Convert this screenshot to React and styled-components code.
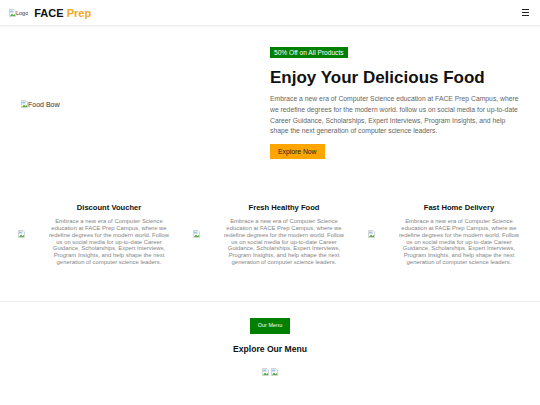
import React from 'react';
import styled, { createGlobalStyle } from 'styled-components';

const GlobalStyle = createGlobalStyle`
  body {
    margin: 0;
    font-family: "Liberation Sans", Arial, sans-serif;
    background: #fff;
    color: #111;
  }
`;

const Nav = styled.nav`
  display: flex;
  align-items: center;
  justify-content: space-between;
  height: 25px;
  padding: 0 11px 0 9px;
  border-bottom: 1px solid #efefef;
  box-shadow: 0 1px 1px rgba(0, 0, 0, 0.03);
`;

const Brand = styled.div`
  display: flex;
  align-items: center;
  gap: 6px;
`;

const BrandName = styled.span`
  font-size: 11px;
  font-weight: bold;
  color: #111;
  span {
    color: #f5a623;
  }
`;

const Broken = styled.span`
  display: inline-flex;
  align-items: center;
  font-size: ${(p) => p.size || 5}px;
  color: #333;
  white-space: nowrap;
  overflow: hidden;
  width: ${(p) => (p.width ? `${p.width}px` : 'auto')};
  flex-shrink: 0;
`;

const BrokenIcon = () => (
  <svg width="7" height="8" viewBox="0 0 14 16" style={{ flexShrink: 0 }}>
    <path d="M1 1h9l3 3v11H1z" fill="#fff" stroke="#aaa" strokeWidth="1" />
    <path d="M2 3h7v4H2z" fill="#9cc7e8" />
    <path d="M2 14l4-5 3 3 3-2v4z" fill="#5ab04a" />
  </svg>
);

const Img = ({ alt, size, width }) => (
  <Broken size={size} width={width}>
    <BrokenIcon />
    {alt}
  </Broken>
);

const Burger = styled.div`
  display: flex;
  flex-direction: column;
  gap: 1.5px;
  span {
    display: block;
    width: 7px;
    height: 1.5px;
    background: #222;
  }
`;

const Hero = styled.section`
  display: grid;
  grid-template-columns: 270px 1fr;
  align-items: center;
  padding: 21px 20px 44px 0;
`;

const HeroLeft = styled.div`
  padding-left: 21px;
`;

const HeroRight = styled.div`
  display: flex;
  flex-direction: column;
  align-items: flex-start;
`;

const Badge = styled.span`
  background: #008000;
  color: #fff;
  font-size: 6.6px;
  padding: 2.5px 4px;
  line-height: 6px;
`;

const Title = styled.h1`
  font-size: 17px;
  font-weight: bold;
  margin: 9px 0 6px;
  line-height: 21px;
`;

const Text = styled.p`
  font-size: 6.8px;
  line-height: 10.8px;
  color: #666;
  margin: 0;
`;

const Button = styled.button`
  border: none;
  font-family: inherit;
  background: ${(p) => (p.green ? '#008000' : '#ffa500')};
  color: ${(p) => (p.green ? '#fff' : '#222')};
  font-size: ${(p) => (p.green ? 5.5 : 6.8)}px;
  padding: ${(p) => (p.green ? '4.5px 8px' : '4px 8px')};
  margin-top: ${(p) => (p.green ? 0 : 7)}px;
  line-height: 7px;
  cursor: pointer;
`;

const Features = styled.section`
  display: grid;
  grid-template-columns: repeat(3, 175px);
  padding: 0 10px 35px;
  border-bottom: 1px solid #eee;
`;

const Feature = styled.div`
  display: flex;
  align-items: center;
  padding-left: 8px;
`;

const FeatureBody = styled.div`
  width: 124px;
  margin-left: 22px;
  text-align: center;
`;

const FeatureTitle = styled.h3`
  font-size: 7.6px;
  margin: 0 0 5px;
  line-height: 10px;
`;

const FeatureText = styled.p`
  font-size: 5.9px;
  line-height: 6.8px;
  color: #858585;
  margin: 0;
`;

const MenuSection = styled.section`
  display: flex;
  flex-direction: column;
  align-items: center;
  padding-top: 16px;
`;

const MenuTitle = styled.h2`
  font-size: 8.6px;
  margin: 10px 0 13px;
  line-height: 11px;
`;

const Thumbs = styled.div`
  display: flex;
  gap: 2px;
`;

const features = [
  'Discount Voucher',
  'Fresh Healthy Food',
  'Fast Home Delivery',
];

const copy =
  'Embrace a new era of Computer Science education at FACE Prep Campus, where we redefine degrees for the modern world. Follow us on social media for up-to-date Career Guidance, Scholarships, Expert Interviews, Program Insights, and help shape the next generation of computer science leaders.';

export default function App() {
  return (
    <>
      <GlobalStyle />
      <Nav>
        <Brand>
          <Img alt="Logo" size={5.5} />
          <BrandName>
            FACE <span>Prep</span>
          </BrandName>
        </Brand>
        <Burger>
          <span />
          <span />
          <span />
        </Burger>
      </Nav>
      <Hero>
        <HeroLeft>
          <Img alt="Food Bowl" size={7} width={39} />
        </HeroLeft>
        <HeroRight>
          <Badge>50% Off on All Products</Badge>
          <Title>Enjoy Your Delicious Food</Title>
          <Text>
            Embrace a new era of Computer Science education at FACE Prep Campus, where we
            redefine degrees for the modern world. follow us on social media for up-to-date
            Career Guidance, Scholarships, Expert Interviews, Program Insights, and help
            shape the next generation of computer science leaders.
          </Text>
          <Button>Explore Now</Button>
        </HeroRight>
      </Hero>
      <Features>
        {features.map((f) => (
          <Feature key={f}>
            <Img alt="" />
            <FeatureBody>
              <FeatureTitle>{f}</FeatureTitle>
              <FeatureText>{copy}</FeatureText>
            </FeatureBody>
          </Feature>
        ))}
      </Features>
      <MenuSection>
        <Button green>Our Menu</Button>
        <MenuTitle>Explore Our Menu</MenuTitle>
        <Thumbs>
          <Img alt="" />
          <Img alt="" />
        </Thumbs>
      </MenuSection>
    </>
  );
}
